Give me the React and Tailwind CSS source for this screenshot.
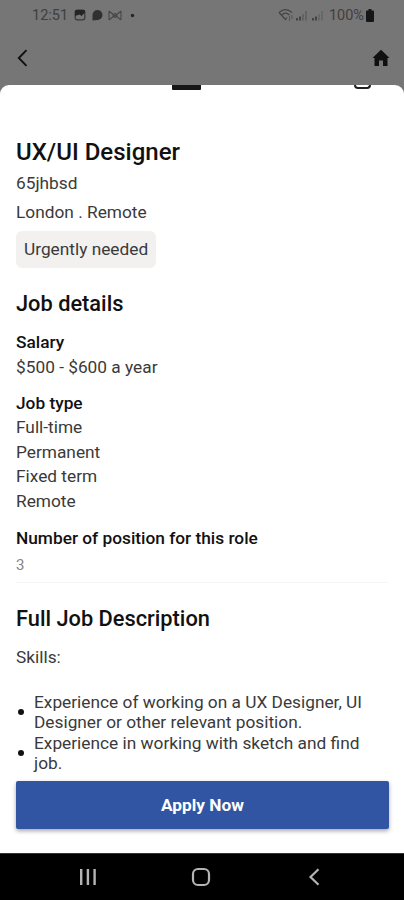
import React from "react";

const jobTypes = ["Full-time", "Permanent", "Fixed term", "Remote"];

const skills = [
  ["Experience of working on a UX Designer, UI", "Designer or other relevant position."],
  ["Experience in working with sketch and find", "job."],
];

const StatusBar = () => (
  <div className="flex h-[30px] items-center justify-between pl-8 pr-[30px] text-[#3f3f3f]">
    <div className="flex items-center">
      <span className="w-[42px] pt-0.5 text-[14.5px] leading-[30px]">12:51</span>
      {/* gallery, chat and mail notifications */}
      <svg width="66" height="14" viewBox="0 0 66 14" fill="none">
        <rect x="1.2" y="2.2" width="9.6" height="9.6" rx="2" stroke="#383838" strokeWidth="1.2" />
        <path d="M1 3.5A1.5 1.5 0 0 1 2.5 2h7A1.5 1.5 0 0 1 11 3.5v1L7.5 8l-2-1.5L1 8z" fill="#252525" />
        <path d="M18.5 12.5V7a5 5 0 1 1 5 5z" fill="#303030" />
        <path d="M35 3v9M47 3v9M35 3l6 5 6-5M35 12l6-5 6 5" stroke="#484848" strokeWidth="1.1" />
        <circle cx="41" cy="7.5" r="2" stroke="#484848" />
        <circle cx="58.5" cy="7.5" r="1.7" fill="#252525" />
      </svg>
    </div>
    <div className="flex items-center">
      <svg width="47" height="14" viewBox="0 0 47 14" fill="none">
        <path d="M1 4.5c4-3.500 9-3.500 13 0M3.5 7c2.500-2.200 5.500-2.200 8 0M1 4.500l6.500 7 1.500-2" stroke="#444" strokeWidth="1.2" />
        <path d="M11.5 8v5M14 7v4" stroke="#555" />
        <path d="M19 10v2.500M22 8.500v4" stroke="#333" strokeWidth="1.5" />
        <path d="M25 6v6.500M28 3v9.500" stroke="#585858" strokeWidth="1.3" />
        <path d="M35 10v2.500M38 8.500v4" stroke="#333" strokeWidth="1.5" />
        <path d="M41 6v6.500M44 3v9.500" stroke="#606060" strokeWidth="1.3" />
      </svg>
      <span className="ml-1 pt-px text-[14.5px] leading-[30px]">100%</span>
      <svg className="ml-0.5" width="8" height="13" viewBox="0 0 8 13" fill="#161616">
        <path d="M2.5 0h3v1.5H7a1 1 0 0 1 1 1V12a1 1 0 0 1-1 1H1a1 1 0 0 1-1-1V2.5a1 1 0 0 1 1-1h1.5z" />
      </svg>
    </div>
  </div>
);

const AppBar = () => (
  <div className="flex h-[55px] items-center justify-between pl-[17px] pr-[14px]">
    <svg width="11" height="18" viewBox="0 0 11 18" fill="none" stroke="#101010" strokeWidth="1.9">
      <path d="M9.5 1.200 1.800 9l7.700 7.800" />
    </svg>
    <svg width="18" height="18" viewBox="0 0 18 18" fill="#101010">
      <path d="M9 .8 17.500 9H15.500v8h-4.500v-5.500h-4V17H2.500V9H.5z" />
    </svg>
  </div>
);

const NavBar = () => (
  <div className="flex h-[47px] items-center border-t border-[#333] bg-black text-[#b4b4b4]">
    <svg className="ml-[79px]" width="18" height="18" viewBox="0 0 18 18" stroke="currentColor" strokeWidth="2.4">
      <path d="M2.200 1v16M8.900 1v16M15.600 1v16" />
    </svg>
    <svg className="ml-[94px]" width="20" height="20" viewBox="0 0 20 20" fill="none" stroke="currentColor" strokeWidth="2.2">
      <rect x="2" y="2" width="16" height="16" rx="5" />
    </svg>
    <svg className="ml-[97px]" width="12" height="18" viewBox="0 0 12 18" fill="none" stroke="currentColor" strokeWidth="2.2">
      <path d="M10.500 1.200 2.500 9l8 7.800" />
    </svg>
  </div>
);

const App = () => {
  return (
    <div className="flex h-[900px] w-[404px] flex-col overflow-hidden bg-[#767676] font-[Roboto,sans-serif]">
      <StatusBar />
      <AppBar />

      <div className="relative flex flex-1 flex-col rounded-t-[9px] bg-white px-4 pt-[52px] text-[17.3px] text-[#3a3a3a]">
        <span className="absolute left-[172px] top-0 h-[5px] w-[29px] rounded-b-[1px] bg-[#161616]" />
        <span className="absolute left-[354px] top-0 h-1 w-[17px] rounded-b-[4px] border-2 border-t-0 border-[#202020]" />

        <h1 className="h-[31px] text-2xl font-medium leading-[31px] text-[#111]">UX/UI Designer</h1>
        <p className="h-[30px] leading-[31px]">65jhbsd</p>
        <p className="h-7 leading-[29px]">London . Remote</p>
        <div className="mt-[5px] h-[37px] self-start rounded-md bg-[#f2f1f0] px-2 leading-[37px]">
          Urgently needed
        </div>

        <h2 className="mt-5 text-[21.8px] font-medium leading-8 text-[#111]">Job details</h2>
        <h3 className="mt-[9px] font-medium leading-[26px] text-[#111]">Salary</h3>
        <p className="leading-6">$500 - $600 a year</p>

        <h3 className="mt-3 font-medium leading-6 text-[#111]">Job type</h3>
        {jobTypes.map((type) => (
          <p key={type} className="leading-[24.7px]">{type}</p>
        ))}

        <h3 className="mt-3 font-medium leading-6 text-[#111]">Number of position for this role</h3>
        <p className="mt-[3px] text-[15px] leading-6 text-[#858585]">3</p>
        <hr className="mt-[5px] border-[#f6f6f6]" />

        <h2 className="mt-5 text-[21.8px] font-medium leading-8 text-[#111]">Full Job Description</h2>
        <p className="mt-2.5 leading-6">Skills:</p>
        <ul className="mt-[23px]">
          {skills.map(([first, second]) => (
            <li key={first} className="flex items-center leading-[20.5px]">
              <span className="-mt-px ml-0.5 mr-2.5 size-1.5 shrink-0 rounded-full bg-[#111]" />
              <span className="whitespace-nowrap">
                {first}
                <br />
                {second}
              </span>
            </li>
          ))}
        </ul>

        <button className="mb-6 mt-auto h-12 w-[373px] shrink-0 rounded-[2px] bg-[#3155a2] pt-px font-bold text-white shadow-[0_2px_4px_rgba(0,0,0,0.35)]">
          Apply Now
        </button>
      </div>

      <NavBar />
    </div>
  );
};

export default App;
